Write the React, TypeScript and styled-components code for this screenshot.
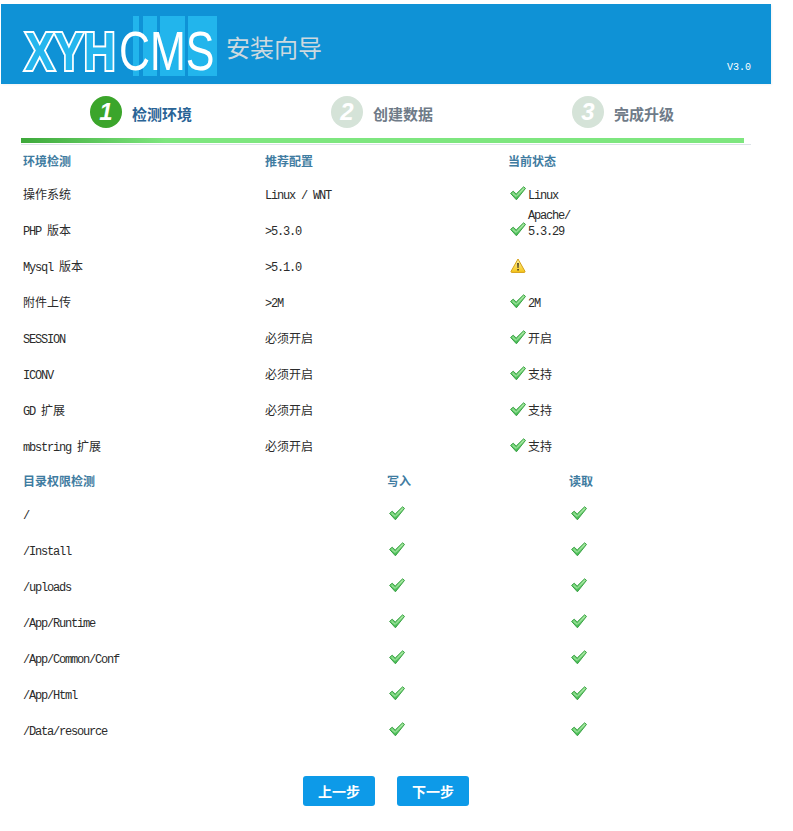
import React, { FunctionComponent } from "react";
import styled, { createGlobalStyle } from "styled-components";

const CJK = `"Noto Sans CJK SC", "Liberation Sans", sans-serif`;

const envRows = [
  { name: "操作系统", need: "Linux / WNT", state: "Linux", status: "ok" },
  { name: "PHP 版本", need: ">5.3.0", state: "Apache/ 5.3.29", status: "ok" },
  { name: "Mysql 版本", need: ">5.1.0", state: "", status: "warn" },
  { name: "附件上传", need: ">2M", state: "2M", status: "ok" },
  { name: "SESSION", need: "必须开启", state: "开启", status: "ok" },
  { name: "ICONV", need: "必须开启", state: "支持", status: "ok" },
  { name: "GD 扩展", need: "必须开启", state: "支持", status: "ok" },
  { name: "mbstring 扩展", need: "必须开启", state: "支持", status: "ok" },
];

const dirs = [
  "/",
  "/Install",
  "/uploads",
  "/App/Runtime",
  "/App/Common/Conf",
  "/App/Html",
  "/Data/resource",
];

const steps = [
  { num: "1", label: "检测环境", active: true },
  { num: "2", label: "创建数据", active: false },
  { num: "3", label: "完成升级", active: false },
];

const Mixed: FunctionComponent<{ text: string }> = ({ text }) => (
  <>
    {text.split(/([\x00-\x7f]+)/).map((part, i) =>
      /^[\x00-\x7f]+$/.test(part) ? <Latin key={i}>{part}</Latin> : part
    )}
  </>
);

const CheckIcon = () => (
  <IconSvg width="16" height="15" viewBox="0 0 16 15">
    <defs>
      <linearGradient id="checkFill" x1="0" y1="0" x2="0" y2="1">
        <stop offset="0" stopColor="#9be693" />
        <stop offset="1" stopColor="#3db84e" />
      </linearGradient>
    </defs>
    <path
      d="M0.6 7.4 L3.2 5.2 L6.2 8 L13.6 0.8 L15.5 2.4 L6.4 13.8 Z"
      fill="url(#checkFill)"
      stroke="#3aa045"
      strokeWidth="1"
      strokeLinejoin="round"
    />
    <path d="M2.6 7.4 L6.2 10.4 L13.6 2.6" fill="none" stroke="#c8f2c0" strokeWidth="0.8" />
  </IconSvg>
);

const WarnIcon = () => (
  <IconSvg width="16" height="15" viewBox="0 0 16 15">
    <defs>
      <linearGradient id="warnFill" x1="0" y1="0" x2="0" y2="1">
        <stop offset="0" stopColor="#fff3a0" />
        <stop offset="1" stopColor="#f5c518" />
      </linearGradient>
    </defs>
    <path
      d="M8 1 L15 13.4 Q15.2 14.4 14 14.4 L2 14.4 Q0.8 14.4 1 13.4 Z"
      fill="url(#warnFill)"
      stroke="#d5a017"
      strokeWidth="1"
      strokeLinejoin="round"
    />
    <path d="M7.2 5 H8.8 L8.5 10 H7.5 Z" fill="#3a3020" />
    <rect x="7.3" y="11" width="1.5" height="1.5" fill="#3a3020" />
  </IconSvg>
);

const Logo = () => (
  <LogoSvg width="200" height="80" viewBox="0 0 200 80">
    <rect x="112" y="12" width="6" height="60" fill="#22b5ec" />
    <rect x="122" y="12" width="14" height="60" fill="#22b5ec" />
    <rect x="139" y="12" width="25" height="60" fill="#22b5ec" />
    <rect x="167" y="12" width="29" height="60" fill="#22b5ec" />
    <text
      transform="translate(4 66) scale(1 1.24)"
      fontFamily="Liberation Sans, sans-serif"
      fontWeight="bold"
      fontSize="44"
      fill="#25b6ee"
      stroke="#ffffff"
      strokeWidth="3.4"
      paintOrder="stroke"
    >
      XYH
    </text>
    <text
      transform="translate(98 66) scale(1 1.3)"
      fontFamily="Liberation Sans, sans-serif"
      fontSize="43"
      fill="#ffffff"
    >
      CMS
    </text>
  </LogoSvg>
);

const App: FunctionComponent = () => (
  <Page>
    <GlobalStyle />
    <Header>
      <Logo />
      <HeaderTitle>安装向导</HeaderTitle>
      <Version>V3.0</Version>
    </Header>
    <Steps>
      {steps.map((step) => (
        <Step key={step.num}>
          <StepNum active={step.active}>{step.num}</StepNum>
          <StepLabel active={step.active}>{step.label}</StepLabel>
        </Step>
      ))}
    </Steps>
    <Progress>
      <ProgressBar />
    </Progress>

    <EnvHead>
      <HeadCell>环境检测</HeadCell>
      <HeadCell>推荐配置</HeadCell>
      <HeadCell>当前状态</HeadCell>
    </EnvHead>
    {envRows.map((row) => (
      <EnvRow key={row.name}>
        <Cell>
          <Mixed text={row.name} />
        </Cell>
        <Cell>
          <Mixed text={row.need} />
        </Cell>
        <StateCell>
          {row.status === "ok" ? <CheckIcon /> : <WarnIcon />}
          {row.state && (
            <StateText>
              <Mixed text={row.state} />
            </StateText>
          )}
        </StateCell>
      </EnvRow>
    ))}

    <DirHead>
      <HeadCell>目录权限检测</HeadCell>
      <HeadCell>写入</HeadCell>
      <HeadCell>读取</HeadCell>
    </DirHead>
    {dirs.map((dir) => (
      <DirRow key={dir}>
        <Cell>
          <Mixed text={dir} />
        </Cell>
        <StateCell>
          <CheckIcon />
        </StateCell>
        <StateCell>
          <CheckIcon />
        </StateCell>
      </DirRow>
    ))}

    <Buttons>
      <Button>上一步</Button>
      <Button>下一步</Button>
    </Buttons>
  </Page>
);

const GlobalStyle = createGlobalStyle`
  body {
    margin: 0;
    background: #ffffff;
    font-family: ${CJK};
    font-size: 12px;
    color: #2b2b2b;
  }
`;

const Page = styled.div`
  width: 770px;
  padding: 4px 0 25px 1px;
`;

const Header = styled.div`
  height: 80px;
  background: #0f92d6;
  display: flex;
  align-items: center;
  padding-left: 20px;
  box-shadow: 1px 1px 2px rgba(0, 0, 0, 0.05);
`;

const LogoSvg = styled.svg`
  display: block;
  flex: none;
`;

const HeaderTitle = styled.div`
  font-size: 24px;
  line-height: 32px;
  color: #cdd9df;
  margin: 6px 0 0 5px;
`;

const Version = styled.div`
  margin-left: auto;
  align-self: flex-end;
  padding: 0 20px 9px 0;
  font-family: "Liberation Mono", monospace;
  font-size: 10px;
  line-height: 14px;
  color: #ffffff;
`;

const Steps = styled.div`
  display: grid;
  grid-template-columns: repeat(3, 241px);
  padding: 12px 0 0 89px;
`;

const Step = styled.div`
  display: flex;
  align-items: center;
  gap: 10px;
  height: 32px;
`;

const StepNum = styled.div<{ active: boolean }>`
  width: 32px;
  height: 32px;
  border-radius: 50%;
  background: ${(props) => (props.active ? "#3ba52b" : "#d5e3d8")};
  color: #ffffff;
  font-family: "Liberation Sans", sans-serif;
  font-style: italic;
  font-weight: bold;
  font-size: 24px;
  line-height: 32px;
  text-align: center;
`;

const StepLabel = styled.div<{ active: boolean }>`
  font-size: 15px;
  font-weight: bold;
  line-height: 20px;
  margin-top: 4px;
  color: ${(props) => (props.active ? "#2a6496" : "#6f7b88")};
`;

const Progress = styled.div`
  width: 730px;
  margin: 10px 0 0 20px;
  border-bottom: 1px solid #dde3e8;
  padding-bottom: 1px;
`;

const ProgressBar = styled.div`
  width: 723px;
  height: 5px;
  background: linear-gradient(90deg, #3da83a 0, #7ee67f 20%, #7ee67f 100%);
`;

const EnvHead = styled.div`
  display: grid;
  grid-template-columns: 242px 243px 1fr;
  align-items: center;
  height: 31px;
  padding-left: 22px;
`;

const DirHead = styled(EnvHead)`
  grid-template-columns: 364px 182px 1fr;
  height: 32px;
  box-sizing: border-box;
  padding-top: 2px;
`;

const HeadCell = styled.div`
  font-weight: bold;
  line-height: 16px;
  color: #3f7ca1;
`;

const EnvRow = styled.div`
  display: grid;
  grid-template-columns: 242px 243px 1fr;
  grid-template-rows: 36px;
  align-items: center;
  padding-left: 22px;
`;

const DirRow = styled(EnvRow)`
  grid-template-columns: 364px 182px 1fr;
`;

const Cell = styled.div`
  line-height: 16px;
  white-space: pre;
`;

const Latin = styled.span`
  font-family: "Liberation Mono", monospace;
  font-size: 12px;
  line-height: 1;
  letter-spacing: -1.2px;
`;

const StateCell = styled.div`
  display: flex;
  align-items: flex-end;
  align-self: stretch;
  height: 36px;
  box-sizing: border-box;
  padding: 0 0 10px 2px;
`;

const IconSvg = styled.svg`
  display: block;
  flex: none;
  margin: 0 2px 1px 0;
`;

const StateText = styled.div`
  width: 44px;
  line-height: 16px;
`;

const Buttons = styled.div`
  display: flex;
  justify-content: center;
  gap: 22px;
  margin-top: 28px;
`;

const Button = styled.button`
  width: 72px;
  height: 30px;
  border: none;
  border-radius: 3px;
  padding: 0;
  background: #0d9ae8;
  color: #ffffff;
  font-family: ${CJK};
  font-size: 14px;
  font-weight: bold;
`;

export default App;
